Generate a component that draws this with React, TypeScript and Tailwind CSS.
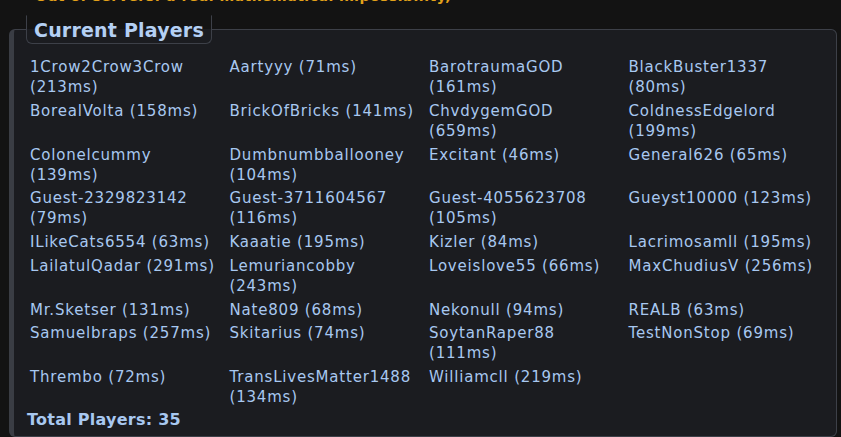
import React from "react";

const players: [string, string][] = [
  ["1Crow2Crow3Crow", "213"],
  ["Aartyyy", "71"],
  ["BarotraumaGOD", "161"],
  ["BlackBuster1337", "80"],
  ["BorealVolta", "158"],
  ["BrickOfBricks", "141"],
  ["ChvdygemGOD", "659"],
  ["ColdnessEdgelord", "199"],
  ["Colonelcummy", "139"],
  ["Dumbnumbballooney", "104"],
  ["Excitant", "46"],
  ["General626", "65"],
  ["Guest-2329823142", "79"],
  ["Guest-3711604567", "116"],
  ["Guest-4055623708", "105"],
  ["Gueyst10000", "123"],
  ["ILikeCats6554", "63"],
  ["Kaaatie", "195"],
  ["Kizler", "84"],
  ["Lacrimosamll", "195"],
  ["LailatulQadar", "291"],
  ["Lemuriancobby", "243"],
  ["Loveislove55", "66"],
  ["MaxChudiusV", "256"],
  ["Mr.Sketser", "131"],
  ["Nate809", "68"],
  ["Nekonull", "94"],
  ["REALB", "63"],
  ["Samuelbraps", "257"],
  ["Skitarius", "74"],
  ["SoytanRaper88", "111"],
  ["TestNonStop", "69"],
  ["Thrembo", "72"],
  ["TransLivesMatter1488", "134"],
  ["Williamcll", "219"],
];

export default function App() {
  return (
    <div
      className="w-[841px] h-[437px] overflow-hidden bg-[#131313]"
      style={{ fontFamily: '"DejaVu Sans", Verdana, sans-serif' }}
    >
      <div className="h-[5px] overflow-hidden">
        <p className="-mt-[12px] ml-[35px] text-[14px] leading-[16px] font-bold tracking-[0.5px] text-[#e3a21a] whitespace-nowrap">
          Out of servers: a real mathematical impossibility,
        </p>
      </div>
      <fieldset className="ml-[9px] mr-[4px] mt-[10px] rounded-md border border-[#3d4048] border-l-[5px] border-l-[#3a3d44] bg-[#1b1c20] h-[422px]">
        <legend className="ml-[12px] px-[7px] h-[29px] rounded-b-md border border-t-transparent border-[#3d4048] text-[19px] leading-[28px] font-bold tracking-[0.2px] text-[#b4d0f4]">
          Current Players
        </legend>
        <div className="pl-[16px] pr-[8px] pt-[13px]">
          <div className="grid grid-cols-4 gap-y-[3.75px]">
            {players.map(([name, ms]) => (
              <div
                key={name}
                className="text-[15px] leading-[20px] tracking-[0.8px] text-[#a8c8f0] pr-[8px]"
              >
                {name} ({ms}ms)
              </div>
            ))}
          </div>
          <div className="-ml-[3px] mt-[3px] text-[16px] leading-[20px] font-bold tracking-[0.25px] text-[#a8c8f0]">
            Total Players: 35
          </div>
        </div>
      </fieldset>
    </div>
  );
}
